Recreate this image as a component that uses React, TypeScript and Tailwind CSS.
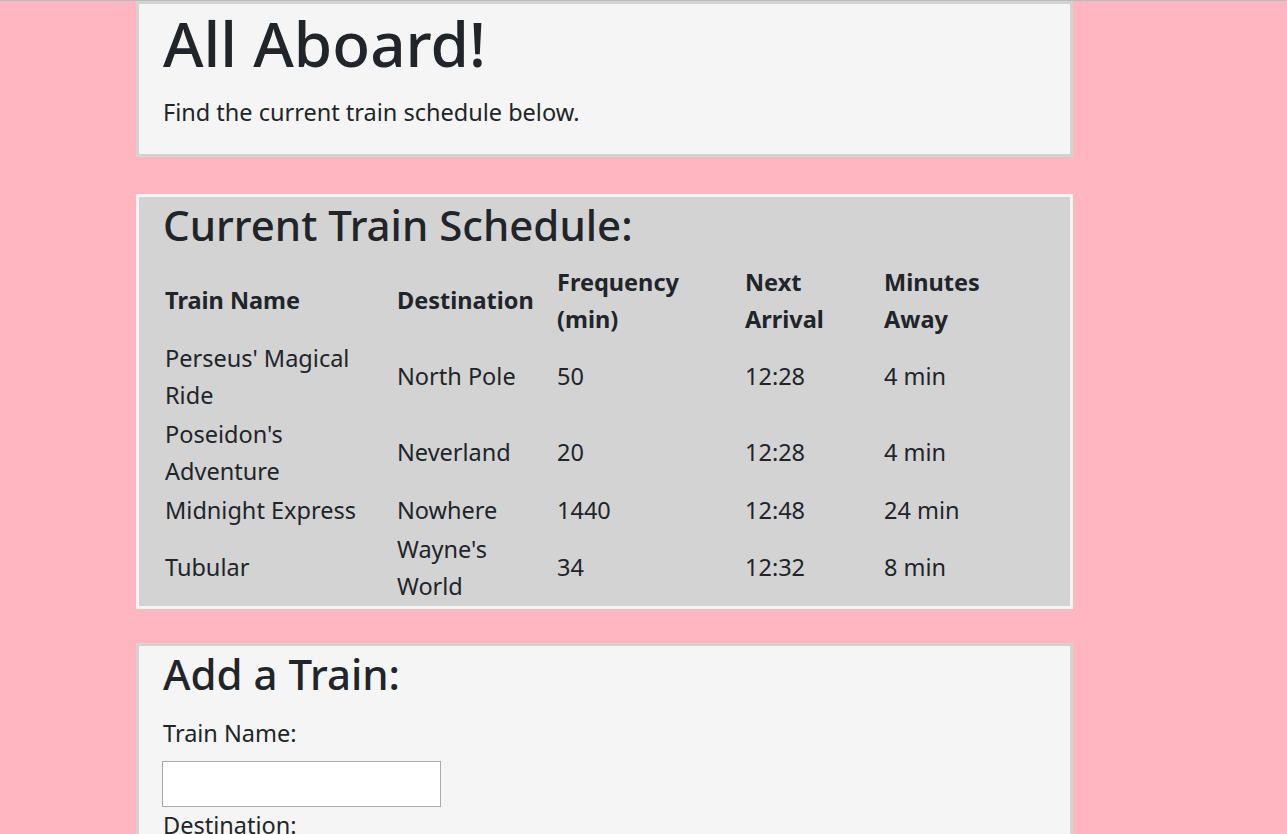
import { useState } from "react";

interface Train {
  name: string;
  destination: string;
  frequency: number;
  nextArrival: string;
  minutesAway: number;
}

const TRAINS: Train[] = [
  { name: "Perseus' Magical Ride", destination: "North Pole", frequency: 50, nextArrival: "12:28", minutesAway: 4 },
  { name: "Poseidon's Adventure", destination: "Neverland", frequency: 20, nextArrival: "12:28", minutesAway: 4 },
  { name: "Midnight Express", destination: "Nowhere", frequency: 1440, nextArrival: "12:48", minutesAway: 24 },
  { name: "Tubular", destination: "Wayne's World", frequency: 34, nextArrival: "12:32", minutesAway: 8 },
];

const FIELDS = ["Train Name:", "Destination:", "First Train Time (HH:mm - military time):", "Frequency (min):"];

export default function App() {
  const [values, setValues] = useState<Record<string, string>>({});

  return (
    <div className="h-screen overflow-hidden bg-[#ffb6c1] text-[#212529] font-['Noto_Sans',sans-serif] text-[23.5px] leading-[37px]">
      <div className="h-px bg-[#bbbbbb]" />

      <div className="ml-[136px] w-[937px] border-[3px] border-[#d3d3d3] bg-[#f5f5f5] px-[24px]">
        <h1 className="mt-[2px] mb-[14px] text-[62px] leading-[1.2] font-medium">All Aboard!</h1>
        <p className="mb-[23px]">Find the current train schedule below.</p>
      </div>

      <div className="ml-[136px] mt-[37px] w-[937px] border-[3px] border-[#f5f5f5] bg-[#d3d3d3] px-[24px]">
        <h2 className="mt-[3px] mb-[12px] text-[42px] leading-[1.2] font-medium">Current Train Schedule:</h2>
        <table className="ml-px w-[882px] table-fixed">
          <thead>
            <tr>
              <th className="w-[232px] p-px text-left font-bold">Train Name</th>
              <th className="w-[160px] p-px text-left font-bold">Destination</th>
              <th className="w-[188px] p-px text-left font-bold">
                Frequency
                <br />
                (min)
              </th>
              <th className="w-[139px] p-px text-left font-bold">Next Arrival</th>
              <th className="p-px text-left font-bold">Minutes Away</th>
            </tr>
          </thead>
          <tbody>
            {TRAINS.map((t) => (
              <tr key={t.name}>
                <td className="p-px align-middle">{t.name}</td>
                <td className="p-px align-middle">{t.destination}</td>
                <td className="p-px align-middle">{t.frequency}</td>
                <td className="p-px align-middle">{t.nextArrival}</td>
                <td className="p-px align-middle">{t.minutesAway} min</td>
              </tr>
            ))}
          </tbody>
        </table>
      </div>

      <div className="ml-[136px] mt-[34px] w-[937px] border-[3px] border-[#d3d3d3] bg-[#f5f5f5] px-[24px] pb-6">
        <h2 className="mt-[3px] mb-[16px] text-[42px] leading-[1.2] font-medium">Add a Train:</h2>
        <form onSubmit={(e) => e.preventDefault()}>
          {FIELDS.map((label) => (
            <div key={label}>
              <label className="block mb-[9px]">{label}</label>
              <input
                className="block w-[279px] h-[46px] -ml-px border border-[#a9a9a9] bg-white px-1"
                value={values[label] ?? ""}
                onChange={(e) => setValues({ ...values, [label]: e.target.value })}
              />
            </div>
          ))}
        </form>
      </div>
    </div>
  );
}
